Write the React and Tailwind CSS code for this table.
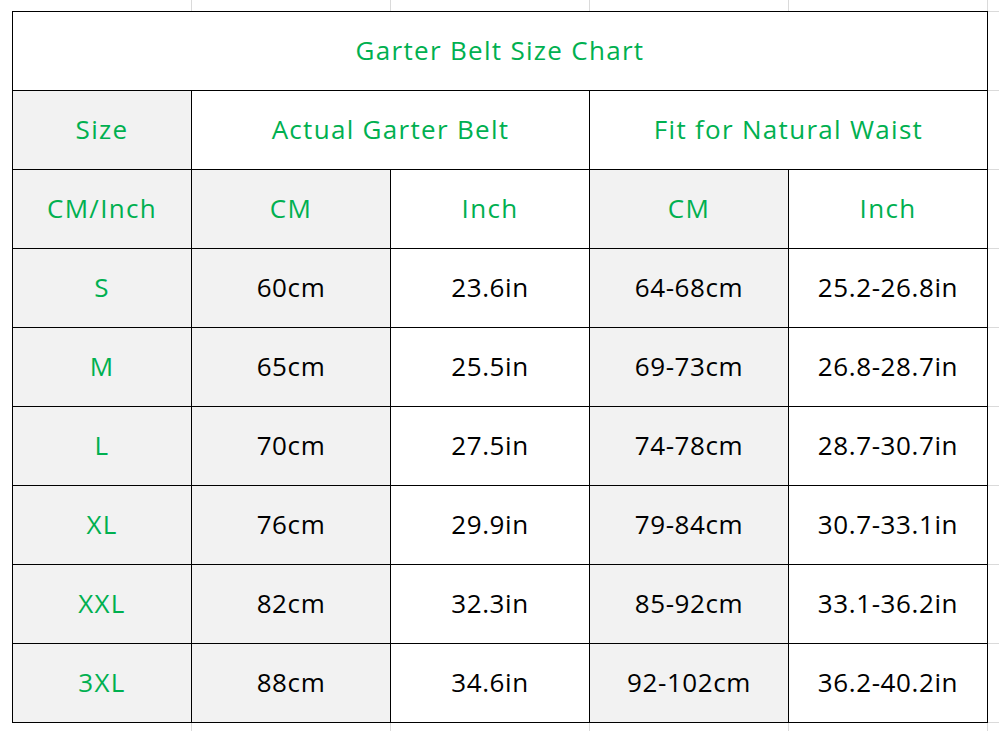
import React from "react";

const rows = [
  ["S", "60cm", "23.6in", "64-68cm", "25.2-26.8in"],
  ["M", "65cm", "25.5in", "69-73cm", "26.8-28.7in"],
  ["L", "70cm", "27.5in", "74-78cm", "28.7-30.7in"],
  ["XL", "76cm", "29.9in", "79-84cm", "30.7-33.1in"],
  ["XXL", "82cm", "32.3in", "85-92cm", "33.1-36.2in"],
  ["3XL", "88cm", "34.6in", "92-102cm", "36.2-40.2in"],
];

const cell = "flex items-center justify-center border-r border-b border-black";
const green = "text-[#00b050] tracking-[1.3px]";
const dark = "text-black tracking-[0.6px]";

function GridStrip({ h }) {
  // faint spreadsheet gridlines above / below the chart
  return (
    <div className={`flex ${h}`}>
      <div className="w-[192px] border-r border-[#dadada]" />
      <div className="w-[199px] border-r border-[#dadada]" />
      <div className="w-[199px] border-r border-[#dadada]" />
      <div className="w-[199px] border-r border-[#dadada]" />
      <div className="w-[199px] border-r border-[#dadada]" />
    </div>
  );
}

export default function App() {
  return (
    <div
      className="w-[999px] h-[731px] bg-white overflow-hidden text-[26px] leading-none"
      style={{ fontFamily: '"Comic Sans MS", "Open Sans", sans-serif' }}
    >
      <GridStrip h="h-[11px]" />
      <div className="flex">
        <div className="w-[12px]" />
        <div className="grid grid-cols-[179px_199px_199px_199px_199px] auto-rows-[79px] border-l border-t border-black">
          <div className={`${cell} col-span-5 pb-[2px] ${green}`}>Garter Belt Size Chart</div>

          <div className={`${cell} bg-[#f2f2f2] pb-[2px] ${green}`}>Size</div>
          <div className={`${cell} col-span-2 pb-[2px] ${green}`}>Actual Garter Belt</div>
          <div className={`${cell} col-span-2 pb-[2px] ${green}`}>Fit for Natural Waist</div>

          <div className={`${cell} bg-[#f2f2f2] pb-[2px] ${green}`}>CM/Inch</div>
          <div className={`${cell} bg-[#f2f2f2] pb-[2px] ${green}`}>CM</div>
          <div className={`${cell} pb-[2px] ${green}`}>Inch</div>
          <div className={`${cell} bg-[#f2f2f2] pb-[2px] ${green}`}>CM</div>
          <div className={`${cell} pb-[2px] ${green}`}>Inch</div>

          {rows.map((r) => (
            <React.Fragment key={r[0]}>
              <div className={`${cell} bg-[#f2f2f2] pb-[2px] ${green}`}>{r[0]}</div>
              <div className={`${cell} bg-[#f2f2f2] pb-[2px] ${dark}`}>{r[1]}</div>
              <div className={`${cell} pb-[2px] ${dark}`}>{r[2]}</div>
              <div className={`${cell} bg-[#f2f2f2] pb-[2px] ${dark}`}>{r[3]}</div>
              <div className={`${cell} pb-[2px] ${dark}`}>{r[4]}</div>
            </React.Fragment>
          ))}
        </div>
        <div className="w-[11px] flex flex-col border-b border-[#dadada]">
          {Array.from({ length: 9 }).map((_, i) => (
            <div key={i} className="h-[79px] border-t border-[#dadada]" />
          ))}
        </div>
      </div>
      <GridStrip h="h-[9px]" />
    </div>
  );
}
